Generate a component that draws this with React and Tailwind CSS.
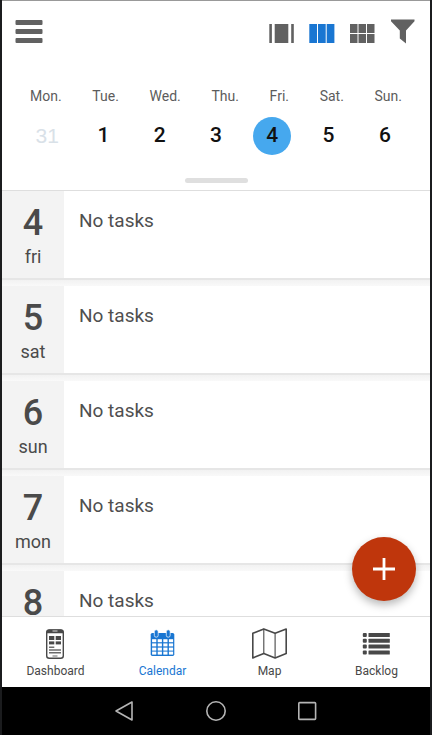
import React from "react";

const week = [
  { label: "Mon.", date: 31, muted: true },
  { label: "Tue.", date: 1 },
  { label: "Wed.", date: 2 },
  { label: "Thu.", date: 3 },
  { label: "Fri.", date: 4, selected: true },
  { label: "Sat.", date: 5 },
  { label: "Sun.", date: 6 },
];

const days = [
  { date: 4, name: "fri" },
  { date: 5, name: "sat" },
  { date: 6, name: "sun" },
  { date: 7, name: "mon" },
  { date: 8, name: "tue" },
];

function MenuIcon() {
  return (
    <svg viewBox="0 0 28 26" className="h-[26px] w-7" fill="#616161" aria-hidden="true">
      <rect x="0.5" y="1" width="27" height="5" rx="1" />
      <rect x="0.5" y="10" width="27" height="5" rx="1" />
      <rect x="0.5" y="19" width="27" height="5" rx="1" />
    </svg>
  );
}

function DayViewIcon() {
  return (
    <svg viewBox="0 0 26 26" className="size-[26px]" fill="currentColor" aria-hidden="true">
      <rect x="0.3" y="5" width="2.6" height="19" />
      <rect x="5.7" y="5" width="13.6" height="19" />
      <rect x="22.2" y="5" width="2.6" height="19" />
    </svg>
  );
}

function WeekViewIcon() {
  return (
    <svg viewBox="0 0 26 26" className="size-[26px]" fill="currentColor" aria-hidden="true">
      <rect x="0.3" y="5" width="7.7" height="19" />
      <rect x="9" y="5" width="7.7" height="19" />
      <rect x="17.7" y="5" width="7.7" height="19" />
    </svg>
  );
}

function MonthViewIcon() {
  return (
    <svg viewBox="0 0 26 26" className="size-[26px]" fill="currentColor" aria-hidden="true">
      <rect x="1" y="5" width="7.5" height="9" />
      <rect x="9.5" y="5" width="7.5" height="9" />
      <rect x="18" y="5" width="7.5" height="9" />
      <rect x="1" y="15" width="7.5" height="9" />
      <rect x="9.5" y="15" width="7.5" height="9" />
      <rect x="18" y="15" width="7.5" height="9" />
    </svg>
  );
}

function FilterIcon() {
  return (
    <svg viewBox="0 0 26 26" className="size-[26px]" fill="currentColor" aria-hidden="true">
      <path d="M2 0.5H25.5V2.2L17 11.5V24.5L10.8 19.5V11.5L2 2.2Z" />
    </svg>
  );
}

function DashboardIcon() {
  return (
    <svg viewBox="1 0 36 32" className="h-8 w-9" aria-hidden="true">
      <rect x="9.7" y="2" width="16.6" height="28.3" rx="2.5" fill="none" stroke="#484848" strokeWidth="1.4" />
      <path d="M9.5 4.5Q9.5 1.5 12.5 1.5H23.5Q26.5 1.5 26.5 4.5V5.2H9.5Z" fill="#484848" />
      <path d="M15.5 3H20.5" stroke="#fff" strokeWidth="0.8" />
      <g fill="#484848">
        <rect x="12" y="8" width="5.3" height="4" />
        <rect x="18.7" y="8" width="5.3" height="4" />
        <rect x="12" y="13.4" width="5.3" height="3" />
        <rect x="18.7" y="13.4" width="5.3" height="3" />
        <rect x="12" y="18.6" width="5.3" height="1.2" />
        <rect x="12" y="21.4" width="12" height="1.2" />
        <rect x="12" y="24.2" width="12" height="1.2" />
      </g>
      <path d="M15.5 28H20.5" stroke="#484848" strokeWidth="0.8" />
    </svg>
  );
}

function CalendarIcon() {
  return (
    <svg viewBox="1 0 36 32" className="h-8 w-9" aria-hidden="true">
      <rect x="6.7" y="5" width="23.6" height="22.9" rx="1.6" fill="#1976d2" />
      <g fill="#fff">
        {[11.2, 15.4, 19.6, 23.6].map((y) =>
          [8.1, 13.7, 19.3, 24.9].map((x) => (
            <rect key={`${x}-${y}`} x={x} y={y} width="4.2" height="3" />
          ))
        )}
      </g>
      <g fill="#1976d2" stroke="#fff" strokeWidth="0.7">
        <rect x="10.3" y="1.8" width="3.9" height="7.4" rx="1.9" />
        <rect x="22.3" y="1.8" width="3.9" height="7.4" rx="1.9" />
      </g>
    </svg>
  );
}

function MapIcon() {
  return (
    <svg viewBox="1 0 36 32" className="h-8 w-9" fill="none" stroke="#484848" aria-hidden="true">
      <path d="M1.8 5.3L12.8 0.9L24.1 5.3L35.2 1.1V25.4L24.1 29.9L12.8 25.4L1.8 29.9Z" strokeWidth="1.6" strokeLinejoin="round" />
      <path d="M12.8 0.9V25.4M24.1 5.3V29.9" strokeWidth="1.1" />
    </svg>
  );
}

function BacklogIcon() {
  return (
    <svg viewBox="1 0 36 32" className="h-8 w-9" fill="#484848" aria-hidden="true">
      {[5, 10.8, 16.6, 22.4].map((y) => (
        <g key={y}>
          <rect x="4.8" y={y} width="4" height="4" rx="1" />
          <rect x="10.5" y={y} width="21.3" height="4" rx="0.5" />
        </g>
      ))}
    </svg>
  );
}

const tabs = [
  { label: "Dashboard", Icon: DashboardIcon },
  { label: "Calendar", Icon: CalendarIcon, active: true },
  { label: "Map", Icon: MapIcon },
  { label: "Backlog", Icon: BacklogIcon },
];

function Header() {
  return (
    <header className="flex items-center justify-between pt-[18px] pr-[15px] pl-[13px] text-[#616161]">
      <button type="button" aria-label="Menu">
        <MenuIcon />
      </button>
      <div className="flex gap-[14px]">
        <button type="button" aria-label="Day view">
          <DayViewIcon />
        </button>
        <button type="button" aria-label="Week view" aria-pressed="true" className="text-[#1976d2]">
          <WeekViewIcon />
        </button>
        <button type="button" aria-label="Month view">
          <MonthViewIcon />
        </button>
        <button type="button" aria-label="Filter">
          <FilterIcon />
        </button>
      </div>
    </header>
  );
}

function WeekStrip() {
  return (
    <section className="flex flex-col border-b border-[#dedede] pt-[41px] pb-[7px]">
      <div className="flex justify-between px-7 text-sm text-[#5c5c5c]">
        {week.map((d) => (
          <span key={d.label}>{d.label}</span>
        ))}
      </div>
      <div className="mt-[11px] grid grid-cols-7 justify-items-center px-[17px] text-[21px]">
        {week.map((d) => (
          <button
            key={d.label}
            type="button"
            className={
              d.muted
                ? "size-[38px] rounded-full font-['Liberation_Sans',sans-serif] text-[#d9e1e8]"
                : d.selected
                  ? "size-[38px] rounded-full bg-[#46a8ee] font-medium text-[#111]"
                  : "size-[38px] rounded-full font-medium text-[#111]"
            }
          >
            {d.date}
          </button>
        ))}
      </div>
      <div className="mt-[23px] h-[5px] w-[63px] self-center rounded-sm bg-[#dfdfdf]" />
    </section>
  );
}

function DayRow({ date, name }) {
  return (
    <li>
      <div className="flex h-[87px]">
        <div className="flex w-[62px] flex-col items-center bg-[#f3f3f3] pt-3 text-[#4a4a4a]">
          <span className="text-[36px] leading-10 font-medium">{date}</span>
          <span className="mt-1 text-lg leading-5">{name}</span>
        </div>
        <p className="flex-1 pt-4 pl-[15px] text-[19px] leading-7 text-[#4f4f4f]">No tasks</p>
      </div>
      <div className="h-2 border-t-2 border-[#e6e6e6] bg-linear-to-b from-[#f2f2f2] to-[#f9f9f9]" />
    </li>
  );
}

export default function App() {
  return (
    <div className="flex h-screen flex-col border-x-2 border-[#1b1c1e] bg-white font-[Roboto,sans-serif]">
      <div className="h-px bg-[#999]" />
      <Header />
      <WeekStrip />

      <main className="relative min-h-0 flex-1">
        <ul className="h-full overflow-hidden">
          {days.map((d) => (
            <DayRow key={d.date} date={d.date} name={d.name} />
          ))}
        </ul>
        <button
          type="button"
          aria-label="Add task"
          className="absolute right-[14px] bottom-[15px] flex size-16 items-center justify-center rounded-full bg-[#bf360c] shadow-[0_4px_8px_rgba(0,0,0,0.28)]"
        >
          <svg viewBox="0 0 24 24" className="size-6" stroke="#fff" strokeWidth="2.8" aria-hidden="true">
            <path d="M1 12H23M12 1V23" />
          </svg>
        </button>
      </main>

      <nav className="relative grid h-[71px] grid-cols-4 border-t border-[#dedede] bg-white text-xs">
        {tabs.map(({ label, Icon, active }) => (
          <a
            key={label}
            href="#"
            className={
              active
                ? "flex flex-col items-center pt-[11px] text-[#1976d2]"
                : "flex flex-col items-center pt-[11px] text-[#484848]"
            }
          >
            <Icon />
            <span className="mt-[3px]">{label}</span>
          </a>
        ))}
      </nav>

      <div className="flex h-12 items-center justify-center gap-[70px] bg-black">
        <button type="button" aria-label="Back">
          <svg viewBox="0 0 22 22" className="size-[22px]" fill="none" stroke="#b5b5b5" strokeWidth="1.6" strokeLinejoin="round" aria-hidden="true">
            <path d="M19 2V20L3 11Z" />
          </svg>
        </button>
        <button type="button" aria-label="Home">
          <svg viewBox="0 0 22 22" className="size-[22px]" fill="none" stroke="#b5b5b5" strokeWidth="1.6" aria-hidden="true">
            <circle cx="11" cy="11" r="9.2" />
          </svg>
        </button>
        <button type="button" aria-label="Recent apps">
          <svg viewBox="0 0 22 22" className="size-[22px]" fill="none" stroke="#b5b5b5" strokeWidth="1.6" aria-hidden="true">
            <rect x="1.8" y="2.6" width="16.8" height="16.8" rx="0.8" />
          </svg>
        </button>
      </div>
    </div>
  );
}
